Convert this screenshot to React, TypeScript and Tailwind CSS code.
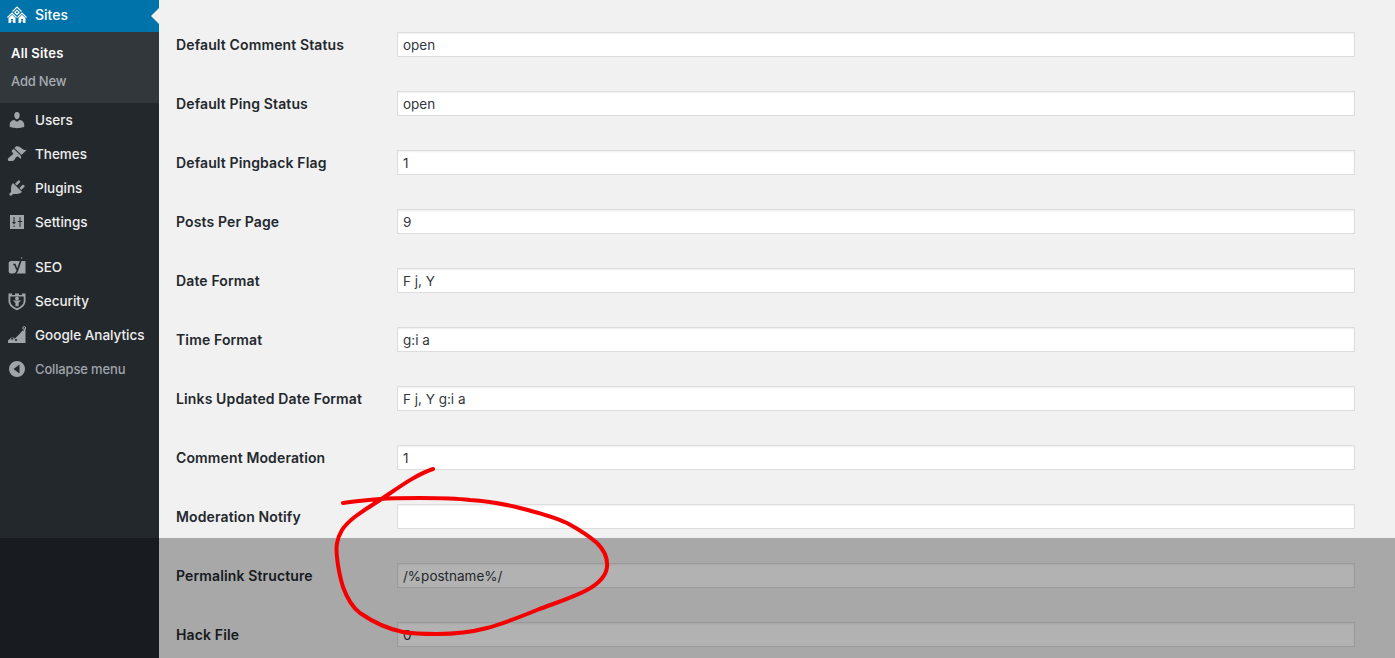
import type { ReactNode } from "react";

const FONT = "font-['Inter','Liberation_Sans',sans-serif]";

const fields = [
    { label: "Default Comment Status", value: "open" },
    { label: "Default Ping Status", value: "open" },
    { label: "Default Pingback Flag", value: "1" },
    { label: "Posts Per Page", value: "9" },
    { label: "Date Format", value: "F j, Y" },
    { label: "Time Format", value: "g:i a" },
    { label: "Links Updated Date Format", value: "F j, Y g:i a" },
    { label: "Comment Moderation", value: "1" },
    { label: "Moderation Notify", value: "" },
    { label: "Permalink Structure", value: "/%postname%/" },
    { label: "Hack File", value: "0" },
];

function Icon({ children, color = "#a0a5aa" }: { children: ReactNode; color?: string }) {
    return (
        <svg viewBox="0 0 20 20" width="20" height="20" fill={color} className="shrink-0">
            {children}
        </svg>
    );
}

const SitesIcon = (
    <Icon color="#ffffff">
        <path d="M5.500 6.500L10 2l4.500 4.500" fill="none" stroke="#ffffff" strokeWidth="1.200" />
        <path fillRule="evenodd" d="M10 4.500l3 3-3 2.800-3-2.800zM10 6.300a1 1 0 1 0 0 2 1 1 0 0 0 0-2z" />
        <path d="M.5 12.500L5 8l4.500 4.500M10.500 12.500L15 8l4.500 4.500" fill="none" stroke="#ffffff" strokeWidth="1.200" />
        <path fillRule="evenodd" d="M5 9.800l3.500 3.400V18H1.500v-4.800zM4 14v1.500h2V14zM3.800 16.300V18h2.400v-1.700z" />
        <path fillRule="evenodd" d="M15 9.800l3.500 3.400V18h-7v-4.800zM14 14v1.500h2V14zM13.800 16.300V18h2.400v-1.700z" />
    </Icon>
);

const menu = [
    {
        label: "Users",
        icon: <path d="M10 9.250c-2.270 0-2.730-3.440-2.730-3.440C7 4.020 7.820 2 9.970 2c2.160 0 2.980 2.020 2.710 3.810 0 0-.41 3.440-2.680 3.440zm0 2.570L12.720 10c2.390 0 4.520 2.330 4.520 4.530v2.490s-3.650 1.130-7.240 1.130c-3.650 0-7.240-1.130-7.240-1.130v-2.490c0-2.250 1.940-4.480 4.470-4.480z" />,
    },
    {
        label: "Themes",
        icon: <path d="M14.480 11.060L7.410 3.990l1.500-1.500c.5-.56 2.300-.47 3.510.32 1.210.8 1.430 1.280 2.910 2.100 1.180.64 2.450 1.260 4.450.85zm-.71.71L6.700 4.700 4.930 6.470c-.39.39-.39 1.020 0 1.410l1.060 1.060c.39.39.39 1.030 0 1.420-.6.6-1.430 1.110-2.210 1.690-.35.26-.7.53-1.010.84C1.430 13.230.4 15.150 1 16.200c.6 1.060 2.140.81 3.300.81 1.150-.01 2.740-.33 3.410-1.540.19-.35.37-.75.58-1.110.36-.62.9-1.120 1.500-1.540.32-.23.72-.27 1.100-.2.38.07.72.4 1 .68l.99 1c.39.39 1.020.39 1.410 0z" />,
    },
    {
        label: "Plugins",
        icon: <path d="M13.110 4.360L9.870 7.600 8 5.730l3.240-3.240c.35-.34 1.050-.2 1.560.32.52.51.66 1.210.31 1.550zm-8 1.770l.91-1.120 9.010 9.010-1.190.84c-.71.71-2.630 1.160-3.820 1.160H6.140L4.900 17.260c-.59.59-1.540.59-2.120 0-.59-.58-.59-1.530 0-2.120l1.240-1.240v-3.880c0-1.130.4-3.190 1.090-3.890zm7.260 3.970l3.240-3.240c.34-.35 1.040-.21 1.550.31.52.51.66 1.210.31 1.550l-3.240 3.250z" />,
    },
    {
        label: "Settings",
        icon: (
            <path
                fillRule="evenodd"
                d="M3 3h14v14H3zM6.500 5v5H5l2 2.600L9 10H7.500V5zM6.500 13.500V15h1v-1.500zM12.500 15v-5h-1.700v-1h1.700V5h1v4h1.700v1h-1.700v5z"
            />
        ),
    },
];

const plugins = [
    {
        label: "SEO",
        icon: (
            <>
                <path d="M4 4h13.500c.5 0 1 .4 1 1v11.500H4c-1.300 0-2.300-1-2.300-2.300V6.300C1.700 5 2.700 4 4 4z" />
                <path d="M6.300 7.500h1.600l2 5.200" fill="none" stroke="#23282d" strokeWidth="1.600" />
                <path d="M14.500 1.500L10.200 14c-.6 1.900-1.800 3-3.800 4" fill="none" stroke="#23282d" strokeWidth="1.700" />
                <path d="M14.500 1.500l.3-1.200" fill="none" stroke="#a0a5aa" strokeWidth="1.200" />
            </>
        ),
    },
    {
        label: "Security",
        icon: (
            <>
                <path fillRule="evenodd" d="M1.500 2.500h3.500v1.500h3V2.500h4V4h3V2.500h3.500V10c0 4-3.500 7.300-8.500 9.200C5 17.300 1.500 14 1.500 10zM3.300 5.500V10c0 3 2.700 5.700 6.700 7.300 4-1.600 6.700-4.300 6.700-7.300V5.500z" />
                <circle cx="10" cy="7.500" r="1.900" />
                <path d="M5.800 9.500h8.400l-2.600 2.300v3.500H8.400v-3.500z" />
            </>
        ),
    },
    {
        label: "Google Analytics",
        icon: (
            <>
                <path d="M1 18v-2.500L5 12l3 1.500L12.500 9l3-3.500 1 .5.800-2.500h1.200V18z" />
                <circle cx="5.200" cy="13.700" r="1.100" fill="#23282d" />
                <circle cx="9" cy="15" r="1.100" fill="#23282d" />
                <circle cx="17.200" cy="3" r="1.400" fill="none" stroke="#a0a5aa" />
            </>
        ),
    },
];

function MenuItem({ label, icon }: { label: string; icon: ReactNode }) {
    return (
        <div className="flex h-[34px] items-center gap-[8px] pl-[7px] text-[13.5px] font-medium text-[#eeeeee]">
            <Icon>{icon}</Icon>
            <span>{label}</span>
        </div>
    );
}

function Sidebar() {
    return (
        <aside className="relative h-full w-[159px] shrink-0 bg-[#23282d]">
            <div className="relative flex h-[32px] items-center gap-[8px] bg-[#0073aa] pb-[2px] pl-[7px] text-[14px] font-medium text-white">
                {SitesIcon}
                <span className="pb-[2px]">Sites</span>
                <div className="absolute right-0 top-[8px] h-0 w-0 border-y-[8px] border-r-[8px] border-y-transparent border-r-[#f1f1f1]" />
            </div>
            <div className="flex h-[71px] flex-col bg-[#32373c] pl-[11px] pt-[8px] text-[13px]">
                <div className="flex h-[28px] items-center font-semibold tracking-[0.2px] text-white">All Sites</div>
                <div className="flex h-[28px] items-center font-medium tracking-[-0.2px] text-[#a7acb1]">Add New</div>
            </div>
            {menu.map((m) => (
                <MenuItem key={m.label} {...m} />
            ))}
            <div className="h-[11px]" />
            {plugins.map((m) => (
                <MenuItem key={m.label} {...m} />
            ))}
            <div className="flex h-[34px] items-center gap-[8px] pl-[7px] text-[13px] font-medium tracking-[-0.15px] text-[#a0a5aa]">
                <Icon>
                    <path fillRule="evenodd" d="M10 2a8 8 0 1 1 0 16 8 8 0 0 1 0-16zM12.500 5.500L6.500 10l6 4.500z" />
                </Icon>
                <span className="pt-[2px]">Collapse menu</span>
            </div>
        </aside>
    );
}

function Field({ label, value }: { label: string; value: string }) {
    return (
        <div className="flex h-[59px] shrink-0 items-center">
            <div className="w-[221px] shrink-0 text-[14px] font-semibold tracking-[0.13px] text-[#23282d]">{label}</div>
            <div className="flex h-[25px] w-[958px] items-center border border-[#dddddd] bg-white pl-[5px] pt-[2px] text-[13.5px] text-[#32373c] shadow-[inset_0_1px_2px_rgba(0,0,0,0.07)]">
                {value}
            </div>
        </div>
    );
}

// hand-drawn circle on top of the screenshot
function Scribble() {
    return (
        <svg className="pointer-events-none absolute left-0 top-0" width="1395" height="658" fill="none">
            <path
                d="M433 469 C415 475 398 488 380 500 C365 510 350 518 342 530 C336 540 336 548 337 557 C338 568 340 577 343 587 C347 598 352 607 360 613 C373 622 388 629 403 632 C414 634 426 634 437 634 C455 634 472 632 487 628 C505 623 520 617 537 610 C555 603 572 598 587 590 C598 584 606 576 607 567 C608 558 604 550 597 543 C588 535 578 529 567 523 C552 516 536 512 520 508 C504 504 487 501 470 500 C453 498 437 498 420 498 C407 498 393 498 380 499 C367 500 355 501 343 503"
                stroke="#f40000"
                strokeWidth="4"
                strokeLinecap="round"
                strokeLinejoin="round"
            />
        </svg>
    );
}

export default function App() {
    return (
        <div className={`relative flex h-[658px] w-[1395px] overflow-hidden bg-[#f1f1f1] ${FONT}`}>
            <Sidebar />
            <main className="flex-1 pl-[17px] pt-[15px]">
                {fields.map((f) => (
                    <Field key={f.label} {...f} />
                ))}
            </main>
            <div className="absolute bottom-0 left-0 right-0 top-[538px] bg-black/30" />
            <Scribble />
        </div>
    );
}
